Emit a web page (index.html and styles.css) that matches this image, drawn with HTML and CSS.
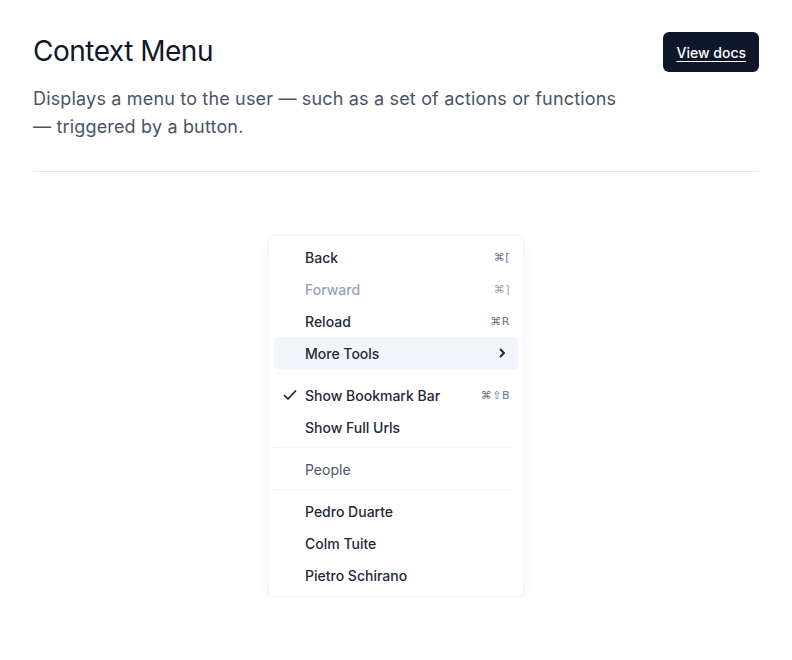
FILE: index.html
```html
<!DOCTYPE html>
<html>
<head>
<meta charset="utf-8">
<link rel="stylesheet" href="styles.css">
</head>
<body>
<div class="page">
  <header class="header">
    <div class="intro">
      <h1 class="title">Context Menu</h1>
      <p class="desc">Displays a menu to the user — such as a set of actions or functions — triggered by a button.</p>
    </div>
    <a class="docs-btn" href="#">View docs</a>
  </header>
  <hr class="rule">
  <div class="preview">
    <div class="menu">
      <div class="item"><span class="label">Back</span><span class="kbd">⌘[</span></div>
      <div class="item disabled"><span class="label">Forward</span><span class="kbd">⌘]</span></div>
      <div class="item"><span class="label">Reload</span><span class="kbd">⌘R</span></div>
      <div class="item active"><span class="label">More Tools</span>
        <svg class="chev" width="12" height="12" viewBox="0 0 12 12"><path d="M4.5 2.5 L8 6 L4.5 9.5" fill="none" stroke="currentColor" stroke-width="2" stroke-linecap="round" stroke-linejoin="round"/></svg>
      </div>
      <div class="sep"></div>
      <div class="item"><svg class="check" width="16" height="16" viewBox="0 0 16 16"><path d="M2.5 8.6 L6 11.8 L13.5 4" fill="none" stroke="currentColor" stroke-width="1.7" stroke-linecap="round" stroke-linejoin="round"/></svg><span class="label">Show Bookmark Bar</span><span class="kbd">⌘⇧B</span></div>
      <div class="item"><span class="label">Show Full Urls</span></div>
      <div class="sep"></div>
      <div class="menu-label">People</div>
      <div class="sep"></div>
      <div class="item"><span class="label">Pedro Duarte</span></div>
      <div class="item"><span class="label">Colm Tuite</span></div>
      <div class="item"><span class="label">Pietro Schirano</span></div>
    </div>
  </div>
</div>
</body>
</html>
```

FILE: styles.css
```css
* { box-sizing: border-box; }
html, body { margin: 0; padding: 0; background: #ffffff; }
body { font-family: Inter, "Noto Sans", sans-serif; color: #0f172a; }
.page { padding: 32px 33px 0 33px; }
.header { display: flex; justify-content: space-between; align-items: flex-start; }
.intro { max-width: 600px; }
.title { margin: 3px 0 0; font-size: 28px; font-weight: 400; line-height: 32px; letter-spacing: -0.5px; color: #0f172a; }
.desc { margin: 18px 0 0; max-width: 600px; font-size: 18px; line-height: 28px; letter-spacing: 0.17px; color: #475569; }
.docs-btn {
  display: inline-flex; align-items: center; justify-content: center;
  height: 40px; padding: 0 13px;
  background: #0f172a; color: #ffffff; border-radius: 6px;
  font-size: 14px; font-weight: 500; text-decoration: underline; text-underline-offset: 3px;
}
.rule { margin: 30px 0 0; border: 0; border-top: 1px solid #e2e8f0; }
.preview { display: flex; justify-content: center; padding-top: 63px; }
.menu {
  width: 256px; padding: 5px; border: 1px solid #f1f5f9; border-radius: 6px;
  background: #fff; box-shadow: 0 4px 12px rgba(15, 23, 42, 0.04);
}
.item {
  position: relative; display: flex; align-items: center; height: 32px;
  padding: 0 8px 0 31px; border-radius: 4px; font-size: 14px; font-weight: 500; color: #1e293b;
}
.item.active { background: #f1f5f9; }
.item.disabled { color: #94a3b8; }
.label { flex: 1; }
.kbd { font-size: 11px; color: #64748b; letter-spacing: 0.5px; font-family: "DejaVu Sans", sans-serif; }
.item.disabled .kbd { color: #94a3b8; }
.chev { color: #1e293b; margin-right: 2px; }
.check { position: absolute; left: 8px; top: 8px; color: #1e293b; }
.sep { height: 1px; background: #f1f5f9; margin: 4px 6px 5px 0; }
.menu-label { height: 32px; display: flex; align-items: center; padding-left: 31px; font-size: 14px; color: #475569; }
```
